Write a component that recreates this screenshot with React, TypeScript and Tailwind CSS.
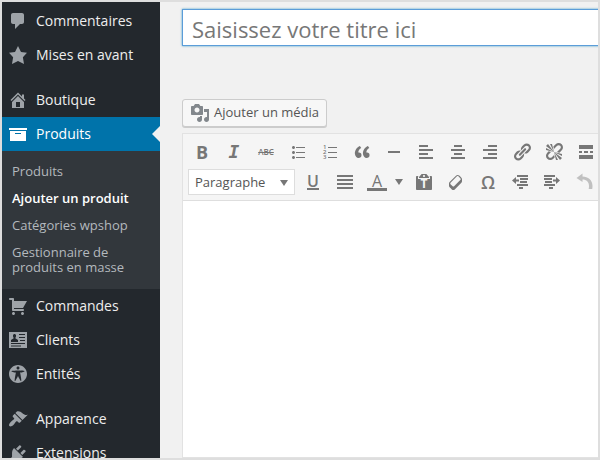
import type { ReactNode } from "react";

const paths = {
  comment: "M5 2h9c1.1 0 2 .9 2 2v7c0 1.1-.9 2-2 2h-2l-5 5v-5H5c-1.1 0-2-.9-2-2V4c0-1.1.9-2 2-2z",
  star: "M10 1l3 6 6 .75-4.12 4.62L16 19l-6-3-6 3 1.13-6.63L1 7.75 7 7z",
  home: "M16 8.5l1.53 1.53-1.06 1.06L10 4.6l-6.47 6.49-1.06-1.06L10 2.5l4 4v-2h2v4zm-6-2.46l6 5.99V18H4v-5.97zM12 17v-5H8v5h4z",
  archive: "M19 4v2H1V4h18zM2 7h16v10H2V7zm11 3V9H7v1h6z",
  cart: "M6 13h9c.55 0 1 .45 1 1s-.45 1-1 1H5c-.55 0-1-.45-1-1V4H2c-.55 0-1-.45-1-1s.45-1 1-1h3c.55 0 1 .45 1 1v2h13l-4 7H6v1zm-.5 3c.83 0 1.5.67 1.5 1.5S6.33 19 5.5 19 4 18.33 4 17.5 4.67 16 5.5 16zm9 0c.83 0 1.5.67 1.5 1.5s-.67 1.5-1.5 1.5-1.5-.67-1.5-1.5.67-1.5 1.5-1.5z",
  card: "M1 2h18v16H1V2zM3 12h7v-2L8.500 9 7.500 8.500V7.500L8 6.500V5L7 4H6L5 5v1.500l.5 1v1L4.500 9 3 10V12zM11 4v1h6V4h-6zM11 7v1h6V7h-6zM12 10v1h5v-1h-5zM3 13v1h14v-1H3zM3 15.500v1h10v-1H3z",
  access: "M19 10c0-4.970-4.030-9-9-9s-9 4.030-9 9 4.030 9 9 9 9-4.030 9-9zm-9-7.400c.83 0 1.500.67 1.500 1.500s-.67 1.510-1.500 1.510c-.82 0-1.500-.68-1.500-1.510s.68-1.500 1.500-1.500zM3.400 7.360c0-.65 6.600-.76 6.600-.76s6.600.11 6.600.76-4.470 1.400-4.470 1.400 1.690 8.140 1.060 8.380c-.62.24-3.190-5.190-3.190-5.190s-2.560 5.430-3.180 5.190c-.63-.24 1.060-8.380 1.060-8.380S3.400 8.010 3.400 7.360z",
  brush: "M14.480 11.060L7.410 3.990l1.500-1.500c.5-.56 2.300-.47 3.510.32 1.210.8 1.430 1.280 2.910 2.100 1.180.64 2.450 1.260 4.450.85zm-.71.71L6.700 4.700 4.930 6.470c-.39.39-.39 1.020 0 1.410l1.060 1.060c.39.39.39 1.030 0 1.420-.6.6-1.430 1.110-2.210 1.690-.35.26-.7.53-1.010.84C1.430 14.230.4 16.080 1.400 17.070c.99 1 2.840-.03 4.180-1.360.31-.31.58-.66.85-1.020.57-.78 1.080-1.610 1.690-2.210.39-.39 1.020-.39 1.410 0l1.060 1.060c.39.39 1.020.39 1.410 0z",
  plug: "M13.110 4.360L9.870 7.600 8 5.730l3.240-3.240c.35-.34 1.050-.2 1.560.32.52.51.66 1.210.31 1.550zm-8 1.770l.91-1.120 9.010 9.010-1.190.84c-.71.71-2.630 1.160-3.820 1.160H6.140L4.900 17.260c-.59.59-1.540.59-2.120 0-.59-.58-.59-1.530 0-2.120l1.240-1.240v-3.880c0-1.130.4-3.190 1.090-3.890zm7.260 3.970l3.240-3.240c.34-.35 1.040-.21 1.550.31.52.51.66 1.210.31 1.550l-3.240 3.250z",
  media: "M13 11V4c0-.55-.45-1-1-1h-1.670L9 1H5L3.670 3H2c-.55 0-1 .45-1 1v7c0 .55.45 1 1 1h10c.55 0 1-.45 1-1zM7 4.500c1.380 0 2.500 1.120 2.500 2.500S8.380 9.500 7 9.500 4.500 8.380 4.500 7 5.620 4.500 7 4.500zM14 6h5v10.500c0 1.380-1.120 2.500-2.500 2.500S14 17.880 14 16.500s1.120-2.500 2.500-2.500c.17 0 .34.02.5.05V9h-3V6zm-4 8.050V13h2v3.500c0 1.380-1.120 2.500-2.500 2.500S7 17.880 7 16.500 8.120 14 9.500 14c.17 0 .34.02.5.05z",
  bullets: "M5.500 7C4.670 7 4 6.330 4 5.500 4 4.680 4.670 4 5.500 4 6.320 4 7 4.680 7 5.500 7 6.330 6.320 7 5.500 7zM8 5h9v1H8V5zm-2.500 7c-.83 0-1.500-.67-1.500-1.500C4 9.680 4.670 9 5.500 9c.82 0 1.500.68 1.500 1.500 0 .83-.68 1.500-1.500 1.500zM8 10h9v1H8v-1zm-2.500 7c-.83 0-1.500-.67-1.500-1.500 0-.82.67-1.500 1.500-1.500.82 0 1.500.68 1.500 1.500 0 .83-.68 1.500-1.500 1.500zM8 15h9v1H8v-1z",
  quote: "M9.490 13.220c0-.74-.2-1.380-.61-1.900-.62-.78-1.830-.88-2.530-.72-.29-1.650 1.110-3.750 2.920-4.650L7.880 4c-2.730 1.300-5.420 4.280-4.960 8.050C3.210 14.430 4.590 16 6.540 16c.85 0 1.560-.25 2.120-.75s.83-1.180.83-2.030zm8.050 0c0-.74-.2-1.380-.61-1.900-.63-.78-1.830-.88-2.530-.72-.29-1.650 1.110-3.750 2.920-4.650L15.930 4c-2.730 1.300-5.410 4.280-4.950 8.050.29 2.380 1.660 3.950 3.610 3.950.85 0 1.560-.25 2.120-.75s.83-1.180.83-2.030z",
  rule: "M4 9h12v2H4z",
  left: "M12 5V3H3v2h9zm5 4V7H3v2h14zm-5 4v-2H3v2h9zm5 4v-2H3v2h14z",
  center: "M14 5V3H6v2h8zm3 4V7H3v2h14zm-3 4v-2H6v2h8zm3 4v-2H3v2h14z",
  right: "M17 5V3H8v2h9zm0 4V7H3v2h14zm0 4v-2H8v2h9zm0 4v-2H3v2h14z",
  justify: "M2 3h16v2H2V3zm0 4h16v2H2V7zm0 4h16v2H2v-2zm0 4h16v2H2v-2z",
  link: "M17.740 2.760c1.680 1.690 1.680 4.410 0 6.100l-1.530 1.520c-1.120 1.120-2.700 1.470-4.140 1.090l2.620-2.610.76-.77.76-.76c.84-.84.84-2.200 0-3.040-.84-.85-2.200-.85-3.040 0l-.77.76-3.380 3.380c-.37-1.440-.02-3.020 1.100-4.140l1.520-1.530c1.690-1.680 4.420-1.680 6.100 0zM8.590 13.430l5.340-5.340c.42-.42.42-1.100 0-1.520-.44-.43-1.130-.39-1.530 0l-5.330 5.340c-.42.42-.42 1.100 0 1.520.44.43 1.130.39 1.520 0zm-.76 2.290l4.140-4.150c.38 1.440.03 3.020-1.090 4.140l-1.520 1.530c-1.690 1.680-4.410 1.680-6.100 0-1.680-1.680-1.680-4.420 0-6.100l1.530-1.520c1.120-1.120 2.700-1.470 4.140-1.100l-4.140 4.150c-.85.84-.85 2.200 0 3.050.84.84 2.200.84 3.040 0z",
  unlink: "M17.740 2.260c1.680 1.690 1.680 4.410 0 6.100l-1.530 1.520c-.32.33-.69.58-1.080.77L13 10l1.690-1.640.76-.77.76-.76c.84-.84.84-2.200 0-3.040-.84-.85-2.200-.85-3.040 0l-.77.76-.76.76L10 7l-.65-2.140c.19-.38.44-.75.77-1.070l1.520-1.530c1.690-1.680 4.420-1.680 6.100 0zM2 4l8 6-6-8zm4-2l4 8-2-8H6zM2 6l8 4-8-2V6zm7.360 7.690L10 13l.74 2.350-1.380 1.390c-1.690 1.680-4.410 1.680-6.100 0-1.680-1.680-1.680-4.420 0-6.100l1.390-1.380L7 10l-.69.64-1.520 1.530c-.85.84-.85 2.200 0 3.040.84.85 2.200.85 3.040 0zM18 16l-8-6 6 8zm-4 2l-4-8 2 8h2zm4-4l-8-4 8 2v2z",
  more: "M17 7V3H3v4h14zM6 11V9H3v2h3zm6 0V9H8v2h4zm5 0V9h-3v2h3zm0 6v-4H3v4h14z",
  clipboard: "M12.380 2L15 5v1H5V5l2.640-3h4.740zM10 5c.55 0 1-.44 1-1 0-.55-.45-1-1-1s-1 .45-1 1c0 .56.45 1 1 1zm5.450-1H17c.55 0 1 .45 1 1v12c0 .56-.45 1-1 1H3c-.55 0-1-.44-1-1V5c0-.55.45-1 1-1h1.550L4 4.630V7h12V4.630z",
  eraser: "M14.290 4.590l1.100 1.110c.41.4.61.94.61 1.470v2.120c0 .53-.2 1.070-.61 1.470l-6.630 6.630c-.4.41-.94.61-1.470.61s-1.070-.2-1.470-.61l-1.110-1.100-1.100-1.110c-.41-.4-.61-.94-.61-1.470v-2.120c0-.54.2-1.070.61-1.480l6.630-6.620c.4-.41.94-.61 1.470-.61s1.060.2 1.470.61zm-6.210 9.700l6.420-6.420c.39-.39.39-1.030 0-1.430L12.360 4.300c-.19-.19-.45-.29-.72-.29s-.52.1-.71.29l-6.420 6.420c-.39.4-.39 1.040 0 1.430l2.140 2.140c.38.38 1.040.38 1.430 0z",
  outdent: "M7 3h11v2H7zM10 6h8v2h-8zM10 9h7v2h-7zM7 12h11v2H7zM9 15h4v2H9zM2 8.500L6 5v2.500h3v2H6V12z",
  indent: "M2 3h11v2H2zM2 6h8v2H2zM3 9h7v2H3zM2 12h11v2H2zM7 15h4v2H7zM18 8.500L14 5v2.500h-3v2h3V12z",
  undo: "M8.500 1.500L2.500 6l6 4V7.500c4 0 6.500 2.500 6.500 6.500 0 1-.1 2-.3 3h3.500c.2-1 .3-2 .3-3C18.500 8 14 4.500 8.500 4.500z",
};

type IconName = keyof typeof paths;

function Icon({ name, className = "", children }: { name: IconName; className?: string; children?: ReactNode }) {
  return (
    <svg viewBox="0 0 20 20" className={`h-5 w-5 shrink-0 fill-current ${className}`} aria-hidden="true">
      <path d={paths[name]} fillRule="evenodd" />
      {children}
    </svg>
  );
}

function MenuItem({ icon, label, current = false }: { icon: IconName; label: string; current?: boolean }) {
  return (
    <a
      href="#"
      aria-current={current ? "true" : undefined}
      className={`relative flex h-[34px] shrink-0 items-center gap-2 pl-1.5 text-sm ${current ? "bg-[#0073aa] text-white" : "text-[#eeeeee]"}`}
    >
      <Icon name={icon} className={current ? "text-white" : "text-[#9ea3a8]"} />
      {label}
      {current && (
        <span className="absolute top-1/2 right-0 h-0 w-0 -translate-y-1/2 border-8 border-transparent border-r-[#f1f1f1]" />
      )}
    </a>
  );
}

function SubMenu() {
  const items = ["Produits", "Ajouter un produit", "Catégories wpshop", "Gestionnaire de produits en masse"];
  return (
    <ul className="shrink-0 bg-[#32373c] pt-[7px] pb-2 text-[13px] leading-[15px]">
      {items.map((item, i) => (
        <li key={item}>
          <a href="#" className={`block py-1.5 pr-6 pl-2.5 ${i === 1 ? "font-semibold text-white" : "text-[#b4b9be]"}`}>
            {item}
          </a>
        </li>
      ))}
    </ul>
  );
}

function Tool({ label, children, className = "" }: { label: string; children: ReactNode; className?: string }) {
  return (
    <button type="button" aria-label={label} className={`flex h-[30px] w-8 shrink-0 items-center justify-center ${className}`}>
      {children}
    </button>
  );
}

function NumberedList() {
  return (
    <span className="flex h-5 w-5 flex-col justify-center pl-[3px]" aria-hidden="true">
      {[1, 2, 3].map((n) => (
        <span key={n} className="flex h-[5px] items-center gap-0.5 text-[6px] leading-[5px] font-semibold">
          {n}
          <span className="h-px w-[9px] bg-current" />
        </span>
      ))}
    </span>
  );
}

export default function App() {
  return (
    <div className="flex h-screen overflow-hidden border-2 border-[#dedede] bg-[#f1f1f1] font-['Open_Sans',sans-serif]">
      <nav className="flex w-[158px] shrink-0 flex-col overflow-hidden bg-[#23282d] pt-0.5">
        <MenuItem icon="comment" label="Commentaires" />
        <MenuItem icon="star" label="Mises en avant" />
        <div className="h-[11px] shrink-0" />
        <MenuItem icon="home" label="Boutique" />
        <MenuItem icon="archive" label="Produits" current />
        <SubMenu />
        <MenuItem icon="cart" label="Commandes" />
        <MenuItem icon="card" label="Clients" />
        <MenuItem icon="access" label="Entités" />
        <div className="h-[11px] shrink-0" />
        <MenuItem icon="brush" label="Apparence" />
        <MenuItem icon="plug" label="Extensions" />
      </nav>

      <main className="flex min-w-0 flex-1 flex-col overflow-hidden pt-[7px] pl-[22px]">
        <input
          type="text"
          aria-label="Titre"
          placeholder="Saisissez votre titre ici"
          className="-mr-1 h-[37px] shrink-0 border border-[#5b9dd9] bg-white px-[9px] pt-0.5 text-[22px] shadow-[0_0_2px_rgba(30,140,190,0.8)] outline-none placeholder:text-[#777777]"
        />
        <button
          type="button"
          className="mt-[53px] mb-1.5 flex h-7 shrink-0 items-center gap-1 self-start rounded-[3px] border border-[#cccccc] bg-[#f7f7f7] px-[7px] text-[13px] text-[#555555] shadow-[0_1px_0_#cccccc]"
        >
          <Icon name="media" className="text-[#82878c]" />
          Ajouter un média
        </button>

        <section className="-mr-1 flex flex-1 flex-col border border-[#e2e2e2] bg-white">
          <div className="overflow-hidden border-b border-[#dedede] bg-[#f5f5f5] py-[3px] pl-[3px] text-[#777777]">
            <div className="flex">
              <Tool label="Gras"><span className="text-lg font-bold">B</span></Tool>
              <Tool label="Italique"><span className="font-['DejaVu_Sans_Mono',monospace] text-lg font-bold italic">I</span></Tool>
              <Tool label="Barré"><span className="text-[8px] font-semibold line-through">ABC</span></Tool>
              <Tool label="Liste à puces"><Icon name="bullets" /></Tool>
              <Tool label="Liste numérotée"><NumberedList /></Tool>
              <Tool label="Citation"><Icon name="quote" /></Tool>
              <Tool label="Ligne horizontale"><Icon name="rule" /></Tool>
              <Tool label="Aligner à gauche"><Icon name="left" /></Tool>
              <Tool label="Centrer"><Icon name="center" /></Tool>
              <Tool label="Aligner à droite"><Icon name="right" /></Tool>
              <Tool label="Lien"><Icon name="link" /></Tool>
              <Tool label="Supprimer le lien"><Icon name="unlink" /></Tool>
              <Tool label="Lire la suite"><Icon name="more" /></Tool>
            </div>
            <div className="flex items-center">
              <div className="relative mx-0.5 w-[107px] shrink-0">
                <select
                  aria-label="Format"
                  className="block h-[26px] w-full appearance-none border border-[#dddddd] bg-white pt-0.5 pl-1.5 text-[13px] text-[#555555]"
                >
                  <option>Paragraphe</option>
                </select>
                <span className="pointer-events-none absolute top-[11px] right-[7px] border-x-4 border-t-[6px] border-x-transparent border-t-[#777777]" />
              </div>
              <Tool label="Souligné"><span className="border-b-2 text-base leading-[13px] font-semibold">U</span></Tool>
              <Tool label="Justifier"><Icon name="justify" /></Tool>
              <Tool label="Couleur du texte"><span className="w-5 border-b-[3px] text-center text-base leading-[14px]">A</span></Tool>
              <Tool label="Choisir une couleur" className="w-[15px]! pr-1">
                <span className="border-x-4 border-t-[6px] border-x-transparent border-t-[#777777]" />
              </Tool>
              <Tool label="Coller en texte">
                <Icon name="clipboard">
                  <text x="10" y="16" textAnchor="middle" className="fill-[#f5f5f5] font-['Open_Sans',sans-serif] text-[12px] font-bold">T</text>
                </Icon>
              </Tool>
              <Tool label="Effacer la mise en forme"><Icon name="eraser" /></Tool>
              <Tool label="Caractère spécial"><span className="text-lg font-semibold">Ω</span></Tool>
              <Tool label="Diminuer le retrait"><Icon name="outdent" /></Tool>
              <Tool label="Augmenter le retrait"><Icon name="indent" /></Tool>
              <Tool label="Annuler"><Icon name="undo" className="text-[#c0c0c0]" /></Tool>
            </div>
          </div>
          <textarea aria-label="Contenu" className="w-full flex-1 resize-none bg-white outline-none" />
        </section>
      </main>
    </div>
  );
}
